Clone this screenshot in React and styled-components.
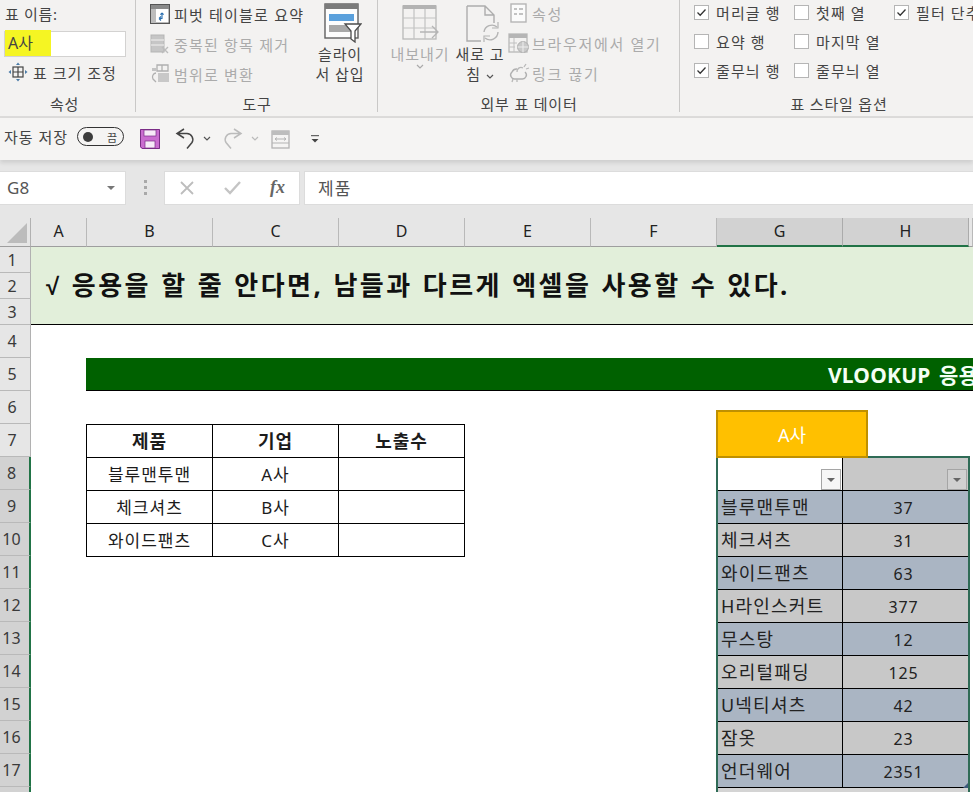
import React from "react";
import styled, { createGlobalStyle } from "styled-components";

const FONT = `"Noto Sans", "Noto Sans CJK KR", sans-serif`;

const Global = createGlobalStyle`
  html, body { margin: 0; padding: 0; background: #fff; }
  body { width: 973px; height: 792px; overflow: hidden; font-family: ${FONT}; }
  * { box-sizing: border-box; }
`;

const Page = styled.div`
  width: 973px;
  height: 792px;
  overflow: hidden;
  display: flex;
  flex-direction: column;
`;

/* ---------- Ribbon ---------- */
const Ribbon = styled.div`
  flex: 0 0 118px;
  display: flex;
  background: #f3f2f1;
  overflow: hidden;
  border-bottom: 2px solid #dcdbda;
`;
const Group = styled.section`
  flex: 0 0 ${(p) => p.$w}px;
  min-width: 0;
  display: flex;
  flex-direction: column;
  position: relative;
  &::after {
    content: "";
    position: absolute;
    right: 0;
    top: 0;
    bottom: 4px;
    width: 1px;
    background: #c9c8c7;
  }
`;
const GroupBody = styled.div`
  flex: 1;
  display: flex;
  padding: ${(p) => p.$pad || "0"};
  gap: ${(p) => p.$gap || 0}px;
  min-height: 0;
`;
const GroupLabel = styled.div`
  flex: 0 0 24px;
  height: 24px;
  line-height: 24px;
  text-align: center;
  padding-right: ${(p) => p.$trim || 0}px;
  font-size: 15px;
  letter-spacing: 0.8px;
  color: #444;
`;
const Stack = styled.div`
  display: flex;
  flex-direction: column;
  width: ${(p) => (p.$w ? `${p.$w}px` : "auto")};
  margin: ${(p) => p.$mt || 0}px 0 0 ${(p) => p.$ml || 0}px;
`;
const NameStack = styled(Stack)`
  width: 122px;
  padding-top: 3px;
`;
const FieldLabel = styled.div`
  font-size: 15px;
  line-height: 22px;
  letter-spacing: 0.7px;
  padding-left: 1px;
  color: #444;
`;
const NameInput = styled.div`
  width: 122px;
  height: 26px;
  margin-top: 6px;
  background: #fff;
  border: 1px solid #d3d2d1;
  display: flex;
  align-items: center;
`;
const Marked = styled.span`
  background: #f5f523;
  width: 46px;
  height: 26px;
  font-size: 16px;
  line-height: 26px;
  padding-left: 3px;
  margin-top: -2px;
  color: #444;
`;
const ToolRow = styled.div`
  display: flex;
  align-items: center;
  height: 30px;
  gap: ${(p) => p.$gap ?? 4}px;
  padding-left: ${(p) => p.$indent || 0}px;
  font-size: 15px;
  letter-spacing: ${(p) => p.$ls ?? 1.2}px;
  white-space: nowrap;
  color: ${(p) => (p.$off ? "#ababab" : "#444")};
`;
const BigButton = styled.div`
  width: ${(p) => p.$w}px;
  flex: 0 0 ${(p) => p.$w}px;
  display: flex;
  flex-direction: column;
  align-items: center;
  text-align: center;
  font-size: 15px;
  line-height: 20px;
  letter-spacing: 0.9px;
  white-space: nowrap;
  color: ${(p) => (p.$off ? "#ababab" : "#444")};
`;
const BigIcon = styled.div`
  height: 40px;
  margin: 3px 0 1px;
  padding-left: ${(p) => p.$shift || 0}px;
`;
const CheckGrid = styled.div`
  display: grid;
  grid-template-columns: 100px 100px 120px;
  grid-template-rows: repeat(3, 29px);
  padding: 0 0 0 14px;
  width: 340px;
  margin-top: -2px;
`;
const CheckItem = styled.div`
  display: flex;
  align-items: center;
  gap: 7px;
  font-size: 15px;
  letter-spacing: 1.1px;
  color: #444;
  white-space: nowrap;
`;
const Box = styled.span`
  flex: 0 0 15px;
  width: 15px;
  height: 15px;
  background: #fff;
  border: 1px solid #b5b5b5;
  display: inline-flex;
  align-items: center;
  justify-content: center;
`;

/* ---------- Quick access ---------- */
const Quick = styled.div`
  flex: 0 0 42px;
  display: flex;
  align-items: center;
  padding-left: 4px;
  background: #f5f4f3;
  box-shadow: 0 3px 4px rgba(0, 0, 0, 0.1);
  position: relative;
  font-size: 15px;
  letter-spacing: 1px;
  color: #444;
`;
const QuickLabel = styled.span`
  margin-bottom: 5px;
`;
const QuickSlot = styled.span`
  display: inline-flex;
  align-items: center;
  margin-left: ${(p) => p.$ml}px;
`;
const Toggle = styled.span`
  width: 47px;
  height: 19px;
  margin: 0 0 5px 9px;
  border: 1px solid #333;
  border-radius: 10px;
  display: flex;
  align-items: center;
  justify-content: space-between;
  padding: 0 6px 0 5px;
  font-size: 11px;
  letter-spacing: 0;
  &::before {
    content: "";
    width: 10px;
    height: 10px;
    background: #3c3c3c;
    border-radius: 50%;
  }
`;

/* ---------- Formula bar ---------- */
const FormulaBar = styled.div`
  flex: 0 0 58px;
  background: #e6e6e6;
  display: flex;
  align-items: center;
  padding-bottom: 3px;
`;
const NameBox = styled.div`
  width: 126px;
  height: 34px;
  background: #fff;
  border: 1px solid #dcdcdc;
  border-left: 0;
  display: flex;
  align-items: center;
  justify-content: space-between;
  padding: 0 10px 0 7px;
  font-size: 17px;
  color: #555;
`;
const Caret = styled.span`
  width: 0;
  height: 0;
  border-left: 4px solid transparent;
  border-right: 4px solid transparent;
  border-top: 4px solid #777;
`;
const Dots = styled.div`
  width: 38px;
  display: flex;
  flex-direction: column;
  align-items: center;
  gap: 3px;
  & > i {
    width: 3px;
    height: 3px;
    background: #a9a9a9;
  }
`;
const FxBox = styled.div`
  width: 136px;
  height: 34px;
  background: #fff;
  border: 1px solid #dcdcdc;
  display: flex;
  align-items: center;
  justify-content: space-between;
  padding: 0 14px 0 15px;
`;
const FxText = styled.span`
  font-family: "Liberation Serif", serif;
  font-style: italic;
  font-weight: 700;
  font-size: 18px;
  color: #666;
`;
const FormulaInput = styled.div`
  flex: 1;
  height: 34px;
  margin-left: 4px;
  background: #fff;
  border: 1px solid #dcdcdc;
  border-right: 0;
  display: flex;
  align-items: center;
  padding-left: 13px;
  font-size: 17px;
  letter-spacing: 1px;
  color: #555;
`;

/* ---------- Sheet ---------- */
const Sheet = styled.div`
  flex: 1;
  position: relative;
  display: grid;
  grid-template-columns: 31px 56px repeat(7, 126px) 1fr;
  grid-template-rows: 29px repeat(3, 26px) repeat(15, 33px);
  background: #fff;
  overflow: hidden;
  color: #222;
`;
const Corner = styled.div`
  grid-column: 1;
  grid-row: 1;
  background: #e6e6e6;
  border-right: 1px solid #b1b1b1;
  border-bottom: 1px solid #9e9e9e;
  position: relative;
  &::after {
    content: "";
    position: absolute;
    right: 3px;
    bottom: 3px;
    border-style: solid;
    border-width: 0 0 20px 20px;
    border-color: transparent transparent #bcbcbc transparent;
  }
`;
const ColHead = styled.div`
  grid-row: 1;
  grid-column: ${(p) => p.$col};
  display: flex;
  align-items: center;
  justify-content: center;
  padding-bottom: 2px;
  font-size: 16px;
  color: #222;
  background: ${(p) => (p.$on ? "#d2d2d2" : "#e6e6e6")};
  border-right: 1px solid ${(p) => (p.$on ? "#ababab" : "#b9b9b9")};
  border-bottom: ${(p) => (p.$on ? "2px solid #217346" : "1px solid #9e9e9e")};
`;
const RowHead = styled.div`
  grid-column: 1;
  grid-row: ${(p) => p.$row};
  display: flex;
  align-items: center;
  justify-content: center;
  padding-right: 6px;
  font-size: 16px;
  color: #3a3a3a;
  background: ${(p) => (p.$on ? "#d2d2d2" : "#e6e6e6")};
  border-bottom: 1px solid #b9b9b9;
  border-right: ${(p) => (p.$on ? "2px solid #217346" : "1px solid #b1b1b1")};
`;
const Banner = styled.div`
  grid-column: 2 / -1;
  grid-row: 2 / span 3;
  background: #e2efda;
  border-bottom: 1px solid #000;
  display: flex;
  align-items: center;
  padding: 0 0 3px 15px;
  font-size: 26px;
  font-weight: 700;
  letter-spacing: 2.45px;
  word-spacing: 1px;
  white-space: nowrap;
  color: #111;
`;
const Root = styled.span`
  font-family: "Liberation Sans", sans-serif;
  font-size: 24px;
`;
const GreenBar = styled.div`
  grid-column: 3 / -1;
  grid-row: 6;
  margin-left: -1px;
  background: #006100;
  border-bottom: 1px solid #000;
  display: flex;
  align-items: center;
  padding-left: 742px;
  font-size: 21px;
  font-weight: 700;
  letter-spacing: 0.2px;
  word-spacing: 3px;
  white-space: nowrap;
  color: #f4fff4;
`;
const Cell = styled.div`
  grid-column: ${(p) => p.$col};
  grid-row: ${(p) => p.$row};
  margin-left: ${(p) => (p.$first ? "-1px" : "0")};
  display: flex;
  align-items: center;
  justify-content: center;
  padding-bottom: 2px;
  font-size: ${(p) => (p.$head ? 18 : 17)}px;
  font-weight: ${(p) => (p.$head ? 700 : 400)};
  letter-spacing: 1px;
  color: #1c1c1c;
  border-top: 1px solid #000;
  border-right: 1px solid #000;
  border-left: ${(p) => (p.$first ? "1px solid #000" : "0")};
  box-shadow: ${(p) => (p.$last ? "0 1px 0 #000" : "none")};
`;
const Slicer = styled.div`
  position: absolute;
  left: 716px;
  top: 192px;
  width: 152px;
  height: 48px;
  background: #ffc000;
  border: 2px solid #bf9000;
  color: #fff;
  font-size: 18px;
  display: flex;
  align-items: center;
  justify-content: center;
  z-index: 2;
`;
const DataShade = styled.div`
  grid-column: 8 / span 2;
  grid-row: 9 / -1;
  background: #d4d4d4;
`;
const DataFrame = styled.div`
  position: absolute;
  left: 716px;
  top: 238px;
  width: 254px;
  height: 340px;
  border: 2px solid #2f6b56;
  z-index: 1;
  pointer-events: none;
  &::after {
    content: "";
    position: absolute;
    right: 0;
    top: 325px;
    border-style: solid;
    border-width: 0 0 5px 5px;
    border-color: transparent transparent #3e5a7c transparent;
  }
`;
const DataCell = styled.div`
  grid-column: ${(p) => p.$col};
  grid-row: ${(p) => p.$row};
  display: flex;
  align-items: center;
  justify-content: ${(p) => (p.$num ? "center" : "flex-start")};
  padding: ${(p) => (p.$num ? "2px 4px 0 0" : "0 0 2px 4px")};
  font-size: ${(p) => (p.$num ? 16 : 18)}px;
  letter-spacing: ${(p) => (p.$num ? 0.8 : 1.2)}px;
  white-space: nowrap;
  color: #222;
  background: ${(p) => p.$bg};
  border-top: 1px solid #000;
  border-right: 1px solid #000;
  box-shadow: ${(p) => (p.$last ? "0 1px 0 #000" : "none")};
`;
const FilterHead = styled(DataCell)`
  align-items: flex-end;
  justify-content: flex-end;
  padding: 0 1px 0 0;
`;
const FilterButton = styled.span`
  width: 20px;
  height: 21px;
  background: ${(p) => (p.$light ? "#f6f6f6" : "#d0d0d0")};
  border: 1px solid #a5a5a5;
  display: flex;
  align-items: center;
  justify-content: center;
`;
const FilterCaret = styled(Caret)`
  border-top-color: #666;
`;

/* ---------- Icons ---------- */
const Svg = ({ w, h, children, style }) => (
  <svg width={w} height={h} viewBox={`0 0 ${w} ${h}`} fill="none" style={style}>
    {children}
  </svg>
);
const Check = () => (
  <Svg w={11} h={9}>
    <path d="M1.5 4.5 4.2 7.2 9.5 1.5" stroke="#333" strokeWidth="1.3" />
  </Svg>
);
const Chevron = ({ c = "#555", size = 8 }) => (
  <svg width={size} height={size * 0.7} viewBox="0 0 8 5.6" fill="none">
    <path d="M1 1l3 3 3-3" stroke={c} strokeWidth="1.2" />
  </svg>
);
const ResizeIcon = () => (
  <Svg w={20} h={20}>
    <rect x="5" y="5" width="10" height="10" stroke="#444" strokeWidth="1.2" />
    <path d="M10 5v10M5 10h10" stroke="#444" strokeWidth="1.2" />
    <path d="M10 0.5 8 3h4zM10 19.5 8 17h4zM0.5 10 3 8v4zM19.5 10 17 8v4z" fill="#4a7ca8" />
  </Svg>
);
const PivotIcon = () => (
  <Svg w={20} h={20}>
    <rect x="0.7" y="0.7" width="18.6" height="18.6" fill="#fff" stroke="#555" strokeWidth="1.4" />
    <rect x="1" y="1" width="18" height="4" fill="#8a8a8a" />
    <rect x="1" y="5" width="5" height="14" fill="#bdbdbd" />
    <path d="M12 9v5.5H9m0 0 2-2m-2 2 2 2M12 9l-1.6 1.6M12 9l1.6 1.6" stroke="#2a6fb0" strokeWidth="1.1" />
  </Svg>
);
const DupIcon = () => (
  <Svg w={20} h={20}>
    <rect x="1" y="1" width="13" height="17" fill="#c6c6c6" stroke="#b5b5b5" />
    <path d="M1 6h13M1 11h13" stroke="#f3f2f1" />
    <path d="M12 13l6 6M18 13l-6 6" stroke="#bcbcbc" strokeWidth="1.4" />
  </Svg>
);
const ConvertIcon = () => (
  <Svg w={20} h={20}>
    <path d="M7 1h11v6H7zM12 1v6" stroke="#b0b0b0" strokeWidth="1.3" />
    <rect x="8" y="9" width="11" height="9" fill="#c8c8c8" />
    <path d="M6 9a4 4 0 0 0-3 6l3 3" stroke="#b0b0b0" strokeWidth="1.3" />
    <path d="M2 4h5v3H2z" fill="#c4c4c4" />
  </Svg>
);
const SlicerIcon = () => (
  <Svg w={38} h={40}>
    <rect x="1" y="1" width="33" height="34" fill="#fdfdfd" stroke="#606060" strokeWidth="1.4" />
    <rect x="1" y="1" width="33" height="5" fill="#7b7b7b" />
    <rect x="5" y="11" width="25" height="7" fill="#5aa0dc" />
    <rect x="5" y="22" width="25" height="7" fill="#a8a8a8" />
    <path d="M21 21h16l-6 7v11l-4-3v-8z" fill="#fff" stroke="#4c4c4c" strokeWidth="1.3" />
  </Svg>
);
const ExportIcon = () => (
  <Svg w={40} h={38}>
    <rect x="3" y="3" width="33" height="33" fill="none" stroke="#b8b8b8" strokeWidth="1.3" />
    <rect x="3" y="2" width="33" height="4" fill="#b3b3b3" />
    <path d="M3 15h33M3 25h33M14 6v30M25 6v30" stroke="#c2c2c2" strokeWidth="1.2" />
    <path d="M20 29h18m-6-6 6 6-6 6" stroke="#b5b5b5" strokeWidth="1.3" />
  </Svg>
);
const RefreshIcon = () => (
  <Svg w={36} h={40}>
    <path d="M2 3h18l9 9v8M20 3v9h9M2 3v35h14" stroke="#adadad" strokeWidth="1.4" />
    <path d="M19 29a8 8 0 0 1 13-5M33 29a8 8 0 0 1-13 6" stroke="#b4b4b4" strokeWidth="1.4" />
    <path d="M33 19v6h-6M19 39v-6h6" stroke="#b4b4b4" strokeWidth="1.2" />
  </Svg>
);
const PropIcon = () => (
  <Svg w={18} h={20}>
    <rect x="1" y="1" width="15" height="18" fill="#fbfbfb" stroke="#b5b5b5" strokeWidth="1.4" />
    <path d="M4 6h3M4 11h3M9 6h4M9 11h4" stroke="#b0b0b0" strokeWidth="1.6" />
  </Svg>
);
const BrowserIcon = () => (
  <Svg w={22} h={20}>
    <rect x="1" y="1" width="18" height="18" stroke="#b7b7b7" strokeWidth="1.3" />
    <rect x="1" y="1" width="18" height="4" fill="#b5b5b5" />
    <path d="M1 10h8M1 14h6M6 5v14" stroke="#c0c0c0" />
    <circle cx="15" cy="14" r="5.5" fill="#c9c9c9" stroke="#aeaeae" />
    <path d="M9.5 14h11M15 8.5v11" stroke="#eee" />
  </Svg>
);
const UnlinkIcon = () => (
  <Svg w={22} h={20}>
    <path d="M9 6a5 5 0 0 0-5 3 4 4 0 0 0 3 7h7a4 4 0 0 0 3-7" stroke="#b0b0b0" strokeWidth="1.4" />
    <path d="M9 9a4 4 0 0 1 6-4M18 1l-2 3M21 5l-3 1M5 16l-1 3M9 16v3" stroke="#b8b8b8" strokeWidth="1.3" />
  </Svg>
);
const SaveIcon = () => (
  <Svg w={20} h={20}>
    <path d="M0 0h20v20H2l-2-2z" fill="#c96ccf" />
    <path d="M0.5 0.5h19v19H2.2l-1.7-1.7z" stroke="#7a2d86" />
    <rect x="4" y="1" width="12" height="6" fill="#f7eaf8" stroke="#7a2d86" strokeWidth="0.7" />
    <rect x="5" y="12" width="10" height="7" fill="#f7eaf8" stroke="#7a2d86" strokeWidth="0.7" />
  </Svg>
);
const UndoIcon = ({ c, flip }) => (
  <Svg w={20} h={22} style={flip ? { transform: "scaleX(-1)" } : undefined}>
    <path d="M9 10 2 5.5 9 1M2 5.5h10a6 6 0 0 1 5 9l-5 6" stroke={c} strokeWidth="1.5" />
  </Svg>
);
const ColumnWidthIcon = () => (
  <Svg w={19} h={19}>
    <rect x="1" y="1" width="17" height="17" stroke="#b3b3b3" strokeWidth="1.3" />
    <rect x="1" y="1" width="17" height="4" fill="#bdbdbd" />
    <path d="M1 13h17M4 9h11m-9-1.5L4 9l2 1.5M13 7.5 15 9l-2 1.5" stroke="#b3b3b3" />
  </Svg>
);
const MoreIcon = () => (
  <Svg w={10} h={8}>
    <path d="M1 0.7h8" stroke="#444" />
    <path d="M1.5 4h7L5 7.5z" fill="#444" />
  </Svg>
);
const CancelIcon = () => (
  <Svg w={14} h={14}>
    <path d="M1 1l12 12M13 1 1 13" stroke="#bdbdbd" strokeWidth="1.8" />
  </Svg>
);
const EnterIcon = () => (
  <Svg w={17} h={14}>
    <path d="M1 7l5 5L16 1" stroke="#c4c4c4" strokeWidth="2.4" />
  </Svg>
);

/* ---------- Data ---------- */
const checks = [
  ["머리글 행", true],
  ["첫째 열", false],
  ["필터 단추", true],
  ["요약 행", false],
  ["마지막 열", false],
  null,
  ["줄무늬 행", true],
  ["줄무늬 열", false],
];
const cols = ["A", "B", "C", "D", "E", "F", "G", "H"];
const products = [
  ["블루맨투맨", "A사"],
  ["체크셔츠", "B사"],
  ["와이드팬츠", "C사"],
];
const data = [
  ["블루맨투맨", "37"],
  ["체크셔츠", "31"],
  ["와이드팬츠", "63"],
  ["H라인스커트", "377"],
  ["무스탕", "12"],
  ["오리털패딩", "125"],
  ["U넥티셔츠", "42"],
  ["잠옷", "23"],
  ["언더웨어", "2351"],
];
const rowNums = Array.from({ length: 18 }, (_, i) => i + 1);

export default function App() {
  return (
    <Page>
      <Global />
      <Ribbon>
        <Group $w={136}>
          <GroupBody $pad="0 0 0 4px">
            <NameStack>
              <FieldLabel>표 이름:</FieldLabel>
              <NameInput>
                <Marked>A사</Marked>
              </NameInput>
              <ToolRow $gap={5} $indent={4} $ls={1}>
                <ResizeIcon />
                표 크기 조정
              </ToolRow>
            </NameStack>
          </GroupBody>
          <GroupLabel $trim={7}>속성</GroupLabel>
        </Group>
        <Group $w={242}>
          <GroupBody $pad="0 0 0 14px">
            <Stack $w={166} $mt={-1}>
              <ToolRow>
                <PivotIcon />
                피벗 테이블로 요약
              </ToolRow>
              <ToolRow $off>
                <DupIcon />
                중복된 항목 제거
              </ToolRow>
              <ToolRow $off>
                <ConvertIcon />
                범위로 변환
              </ToolRow>
            </Stack>
            <BigButton $w={48}>
              <BigIcon $shift={6}>
                <SlicerIcon />
              </BigIcon>
              슬라이
              <br />서 삽입
            </BigButton>
          </GroupBody>
          <GroupLabel>도구</GroupLabel>
        </Group>
        <Group $w={302}>
          <GroupBody $pad="0 0 0 11px" $gap={4}>
            <BigButton $w={62} $off>
              <BigIcon>
                <ExportIcon />
              </BigIcon>
              내보내기
              <Chevron c="#aaa" />
            </BigButton>
            <BigButton $w={50}>
              <BigIcon $shift={6}>
                <RefreshIcon />
              </BigIcon>
              새로 고
              <span>
                침 <Chevron />
              </span>
            </BigButton>
            <Stack $ml={-1} $mt={-2}>
              <ToolRow $off $gap={4} $indent={2} $ls={1.7}>
                <PropIcon />속성
              </ToolRow>
              <ToolRow $off $gap={2} $ls={1.7}>
                <BrowserIcon />
                브라우저에서 열기
              </ToolRow>
              <ToolRow $off $gap={2} $ls={1.7}>
                <UnlinkIcon />
                링크 끊기
              </ToolRow>
            </Stack>
          </GroupBody>
          <GroupLabel>외부 표 데이터</GroupLabel>
        </Group>
        <Group $w={318}>
          <GroupBody>
            <CheckGrid>
              {checks.map((c, i) =>
                c ? (
                  <CheckItem key={i}>
                    <Box>{c[1] && <Check />}</Box>
                    {c[0]}
                  </CheckItem>
                ) : (
                  <span key={i} />
                )
              )}
            </CheckGrid>
          </GroupBody>
          <GroupLabel>표 스타일 옵션</GroupLabel>
        </Group>
      </Ribbon>

      <Quick>
        <QuickLabel>자동 저장</QuickLabel>
        <Toggle>끔</Toggle>
        <QuickSlot $ml={16}>
          <SaveIcon />
        </QuickSlot>
        <QuickSlot $ml={15}>
          <UndoIcon c="#444" flip={false} />
        </QuickSlot>
        <QuickSlot $ml={8}>
          <Chevron />
        </QuickSlot>
        <QuickSlot $ml={12}>
          <UndoIcon c="#bbb" flip />
        </QuickSlot>
        <QuickSlot $ml={8}>
          <Chevron c="#bbb" />
        </QuickSlot>
        <QuickSlot $ml={12}>
          <ColumnWidthIcon />
        </QuickSlot>
        <QuickSlot $ml={20}>
          <MoreIcon />
        </QuickSlot>
      </Quick>

      <FormulaBar>
        <NameBox>
          G8
          <Caret />
        </NameBox>
        <Dots>
          <i />
          <i />
          <i />
        </Dots>
        <FxBox>
          <CancelIcon />
          <EnterIcon />
          <FxText>fx</FxText>
        </FxBox>
        <FormulaInput>제품</FormulaInput>
      </FormulaBar>

      <Sheet>
        <Corner />
        {cols.map((c, i) => (
          <ColHead key={c} $col={i + 2} $on={c === "G" || c === "H"}>
            {c}
          </ColHead>
        ))}
        <ColHead $col={10} />
        {rowNums.map((n) => (
          <RowHead key={n} $row={n + 1} $on={n >= 8}>
            {n}
          </RowHead>
        ))}
        <Banner>
          <span>
            <Root>√</Root> 응용을 할 줄 안다면, 남들과 다르게 엑셀을 사용할 수 있다.
          </span>
        </Banner>
        <GreenBar>VLOOKUP 응용</GreenBar>

        {["제품", "기업", "노출수"].map((t, i) => (
          <Cell key={t} $col={i + 3} $row={8} $head $first={i === 0}>
            {t}
          </Cell>
        ))}
        {products.map((p, r) =>
          [p[0], p[1], ""].map((t, i) => (
            <Cell key={`${r}-${i}`} $col={i + 3} $row={r + 9} $first={i === 0} $last={r === 2}>
              {t}
            </Cell>
          ))
        )}

        <Slicer>A사</Slicer>
        <DataShade />
        <FilterHead $col={8} $row={9} $bg="#fff">
          <FilterButton $light>
            <FilterCaret />
          </FilterButton>
        </FilterHead>
        <FilterHead $col={9} $row={9} $bg="#c8c8c8">
          <FilterButton>
            <FilterCaret />
          </FilterButton>
        </FilterHead>
        {data.map((d, r) => {
          const bg = r % 2 === 0 ? "#aab5c3" : "#c8c8c8";
          const last = r === data.length - 1;
          return (
            <React.Fragment key={d[0]}>
              <DataCell $col={8} $row={r + 10} $bg={bg} $last={last}>
                {d[0]}
              </DataCell>
              <DataCell $col={9} $row={r + 10} $bg={bg} $num $last={last}>
                {d[1]}
              </DataCell>
            </React.Fragment>
          );
        })}
        <DataFrame />
      </Sheet>
    </Page>
  );
}
